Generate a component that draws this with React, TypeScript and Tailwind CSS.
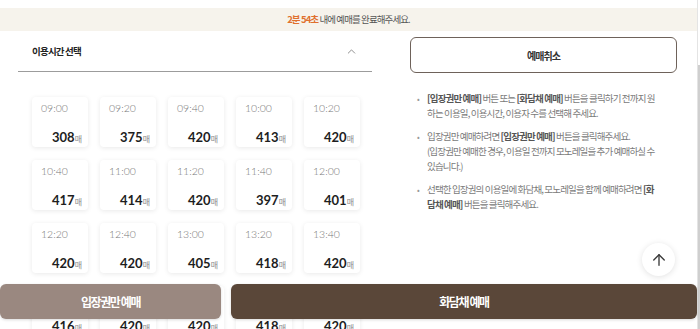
import { ChevronUp, ArrowUp } from "lucide-react";

const slots: [string, number][] = [
  ["09:00", 308], ["09:20", 375], ["09:40", 420], ["10:00", 413], ["10:20", 420],
  ["10:40", 417], ["11:00", 414], ["11:20", 420], ["11:40", 397], ["12:00", 401],
  ["12:20", 420], ["12:40", 420], ["13:00", 405], ["13:20", 418], ["13:40", 420],
  ["14:00", 416], ["14:20", 420], ["14:40", 420], ["15:00", 418], ["15:20", 420],
];

const kr = "font-['Noto_Sans_CJK_KR',sans-serif]";

function SlotCard({ time, count }: { time: string; count: number }) {
  return (
    <div className="h-[50px] w-[56px] rounded-[4px] bg-white pl-[9px] pr-[6px] pt-[4px] shadow-[0_1px_5px_rgba(0,0,0,0.09)]">
      <p className="font-['Lato',sans-serif] text-[10.5px] font-light leading-[14px] text-[#777]">{time}</p>
      <p className="mt-[12px] text-right leading-[16px]">
        <span className="font-['Lato',sans-serif] text-[13px] font-bold text-[#1e1e1e]">{count}</span>
        <span className={`${kr} text-[8px] text-[#8a8a8a]`}>매</span>
      </p>
    </div>
  );
}

function Bullet({ children }: { children: React.ReactNode }) {
  return (
    <li className="flex gap-[6px]">
      <span className="w-[4px] shrink-0 text-[8px] text-[#999]">•</span>
      <p>{children}</p>
    </li>
  );
}

export default function App() {
  return (
    <div className={`relative flex h-[329px] w-[700px] overflow-hidden bg-white ${kr}`}>
      <div className="flex w-[697px] flex-col">
        <div className="h-[8px] shrink-0" />
        <div className="h-[23px] shrink-0 bg-[#f6f3ec] text-center text-[9.5px] leading-[23px] tracking-[-0.9px] text-[#555]">
          <span className="font-bold text-[#e0702e]">2분 54초</span> 내에 예매를 완료해주세요.
        </div>

        <div className="flex shrink-0">
          <div className="ml-[18px] w-[354px]">
            <div className="flex h-[41px] items-center border-b border-[#9c9c9c] px-[14px]">
              <span className="flex-1 text-[9.5px] font-bold tracking-[-0.8px] text-[#222]">이용시간 선택</span>
              <ChevronUp size={13} strokeWidth={1.5} className="text-[#777]" />
            </div>
            <div className="mt-[25px] grid grid-cols-[repeat(5,56px)] gap-x-[12px] gap-y-[13px] pl-[14px]">
              {slots.map(([t, c]) => (
                <SlotCard key={t} time={t} count={c} />
              ))}
            </div>
          </div>

          <div className="ml-[38px] w-[267px] pt-[6px]">
            <button
              type="button"
              className="flex h-[36px] w-full items-center justify-center rounded-[6px] border border-[#6e625a] text-[10px] font-bold tracking-[-1px] text-[#333]"
            >
              예매취소
            </button>
            <ul className="mt-[18px] flex flex-col gap-[8px] pl-[7px] text-[9.5px] leading-[15px] tracking-[-0.85px] text-[#7a7a7a]">
              <Bullet>
                <b className="font-bold text-[#555]">[입장권만 예매]</b> 버튼 또는 <b className="font-bold text-[#555]">[화담채 예매]</b> 버튼을 클릭하기 전까지 원
                <br />
                하는 이용일, 이용시간, 이용자 수를 선택해 주세요.
              </Bullet>
              <Bullet>
                입장권만 예매하려면 <b className="font-bold text-[#555]">[입장권만 예매]</b> 버튼을 클릭해주세요.
                <br />
                (입장권만 예매한 경우, 이용일 전까지 모노레일을 추가 예매하실 수
                <br />
                있습니다.)
              </Bullet>
              <Bullet>
                선택한 입장권의 이용일에 화담채, 모노레일을 함께 예매하려면 <b className="font-bold text-[#555]">[화</b>
                <br />
                <b className="font-bold text-[#555]">담채 예매]</b> 버튼을 클릭해주세요.
              </Bullet>
            </ul>
          </div>
        </div>
      </div>

      <div className="flex w-[3px] flex-col border-l border-[#e4e4e4]">
        <div className="h-[65px] shrink-0" />
        <div className="flex-1 bg-[#cfcfcf]" />
      </div>

      <button
        type="button"
        className="absolute left-[642px] top-[243px] flex h-[33px] w-[33px] items-center justify-center rounded-full bg-white text-[#3a3a3a] shadow-[0_1px_6px_rgba(0,0,0,0.12)]"
      >
        <ArrowUp size={18} strokeWidth={1.8} />
      </button>

      <div className="absolute bottom-[10px] left-0 flex w-[697px] gap-[10px]">
        <button
          type="button"
          className="h-[35px] w-[221px] rounded-[6px] bg-[#9a8880] text-[12px] font-bold tracking-[-1.4px] text-white shadow-[0_1px_3px_rgba(0,0,0,0.15)]"
        >
          입장권만 예매
        </button>
        <button
          type="button"
          className="h-[35px] flex-1 rounded-[6px] bg-[#5a4739] text-[12px] font-bold tracking-[-1.4px] text-white shadow-[0_1px_3px_rgba(0,0,0,0.15)]"
        >
          화담채 예매
        </button>
      </div>
    </div>
  );
}
